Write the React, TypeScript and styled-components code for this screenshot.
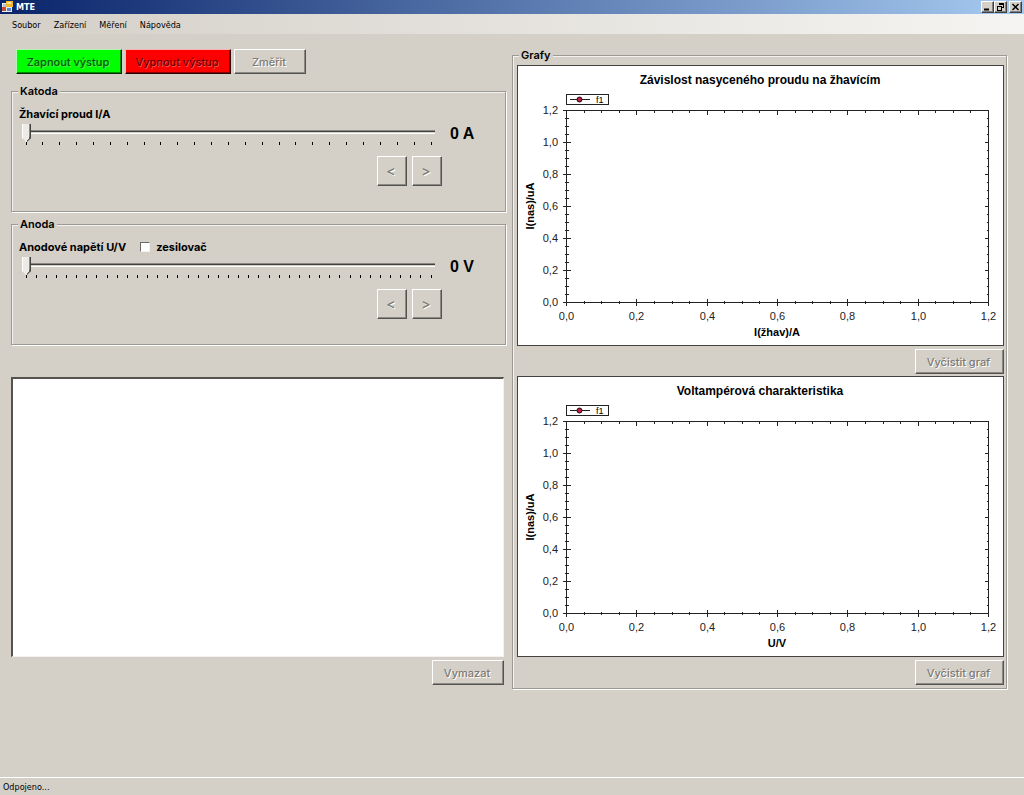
import React from 'react';
import styled, { createGlobalStyle } from 'styled-components';

const FACE = '#d4d0c8';
const SHADOW = '#9c9a94';
const UI_FONT = '"DejaVu Sans Condensed", "Noto Sans", sans-serif';
const FORM_FONT = 'Inter, "Liberation Sans", sans-serif';
const CHART_FONT = '"Liberation Sans", Arial, sans-serif';

const GlobalStyle = createGlobalStyle`
  *, *::before, *::after { box-sizing: border-box; }
  body {
    margin: 0;
    background: ${FACE};
    color: #000;
    font-family: ${FORM_FONT};
    font-size: 11px;
    line-height: 14px;
  }
`;

const Window = styled.div`
  display: flex;
  flex-direction: column;
  min-height: 100vh;
`;

const TitleBar = styled.header`
  display: flex;
  align-items: center;
  gap: 3px;
  height: 14px;
  padding: 0 2px;
  background: linear-gradient(to right, #0a246a, #a6caf0);
`;

const Title = styled.h1`
  flex: 1;
  margin: 0;
  color: #fff;
  font: bold 9px/14px ${UI_FONT};
`;

const Captions = styled.div`
  display: flex;
`;

const CaptionButton = styled.button<{ $apart?: boolean }>`
  display: flex;
  width: 13px;
  height: 12px;
  margin-left: ${(p) => (p.$apart ? 2 : 0)}px;
  padding: 0;
  border: 1px solid;
  border-color: #fff #404040 #404040 #fff;
  background: ${FACE};
  box-shadow: inset -1px -1px #808080;
`;

const MenuBar = styled.nav`
  display: flex;
  gap: 1px;
  height: 20px;
  padding: 0 6px;
  background: linear-gradient(to right, #d4d0c8, #f5f4f2);
`;

const MenuItem = styled.button`
  padding: 2px 6px 0;
  border: 0;
  background: transparent;
  color: #000;
  font: 9px/18px ${UI_FONT};
`;

const Workspace = styled.main`
  flex: 1;
  display: grid;
  grid-template-columns: minmax(0, 1fr) minmax(0, 1fr);
  align-items: start;
  gap: 6px;
  padding: 14px 17px 14px 11px;
`;

const Controls = styled.div`
  display: flex;
  flex-direction: column;
  gap: 5px;
  padding-top: 1px;
`;

const Toolbar = styled.div`
  display: flex;
  gap: 3px;
  padding: 0 5px 5px;
`;

type Tone = 'face' | 'green' | 'red';

const tones = {
  face: { back: FACE, text: '#7c7a76', glow: '#fff', light: '#fff', dark: '#55534f', mid: '#8c8a84' },
  green: { back: '#00ff00', text: '#005c00', glow: '#50e850', light: '#b4f5b4', dark: '#002c00', mid: '#008a00' },
  red: { back: '#ff0000', text: '#640000', glow: '#ff5050', light: '#f5b4b4', dark: '#2c0000', mid: '#8a0000' },
};

const PushButton = styled.button<{ $width: number; $tone?: Tone }>`
  width: ${(p) => p.$width}px;
  height: 25px;
  padding: 0 2px 0 0;
  border: 1px solid;
  border-color: ${(p) => {
    const t = tones[p.$tone ?? 'face'];
    return `${t.light} ${t.dark} ${t.dark} ${t.light}`;
  }};
  background: ${(p) => tones[p.$tone ?? 'face'].back};
  box-shadow: inset -1px -1px ${(p) => tones[p.$tone ?? 'face'].mid};
  color: ${(p) => tones[p.$tone ?? 'face'].text};
  text-shadow: 1px 1px ${(p) => tones[p.$tone ?? 'face'].glow};
  font: 500 11px/14px ${FORM_FONT};
`;

const StepButton = styled(PushButton)`
  height: 30px;
  font-size: 14px;
`;

const Group = styled.fieldset`
  min-width: 0;
  margin: 0;
  padding: 0;
  border: 1px solid ${SHADOW};
  box-shadow: 1px 1px #fff, inset 1px 1px #f4f2ee;
`;

const Legend = styled.legend`
  margin-left: 6px;
  padding: 0 2px;
  background: ${FACE};
  font: 600 11px/14px ${FORM_FONT};
`;

const GroupBody = styled.div`
  padding: 8px 0 25px 7px;
`;

const LabelRow = styled.div`
  display: flex;
  align-items: center;
  gap: 14px;
  height: 16px;
  margin-bottom: 2px;
  font-weight: 700;
`;

const CheckLabel = styled.label`
  display: flex;
  align-items: center;
  gap: 6px;
`;

const CheckBox = styled.input`
  appearance: none;
  width: 10px;
  height: 10px;
  margin: 0;
  border: 1px solid;
  border-color: #6a6864 #f4f2ee #f4f2ee #6a6864;
  background: #fff;
`;

const SliderRow = styled.div`
  display: flex;
  align-items: flex-start;
`;

const SliderColumn = styled.div`
  flex: 1;
  display: flex;
  flex-direction: column;
  padding: 0 15px 0 3px;
`;

const Slider = styled.input`
  appearance: none;
  display: block;
  width: 100%;
  height: 18px;
  margin: 0;
  background: transparent;

  &::-webkit-slider-runnable-track {
    height: 18px;
    background: linear-gradient(#8a8882, #8a8882) 0 6px / 100% 1px no-repeat,
      linear-gradient(#44423e, #44423e) 0 7px / 100% 1px no-repeat,
      linear-gradient(#fff, #fff) 0 9px / 100% 1px no-repeat;
  }

  &::-webkit-slider-thumb {
    appearance: none;
    width: 9px;
    height: 18px;
    background: linear-gradient(128deg, transparent 35%, #55534f 36%) 5px 13px / 4px 5px no-repeat,
      linear-gradient(to right, #fff 1px, #ecebe6 1px 7px, #8c8a84 7px 8px, #44423e 8px);
    clip-path: polygon(0 0, 100% 0, 100% 14px, 5px 100%, 4px 100%, 0 14px);
  }
`;

const TickScale = styled.svg`
  display: block;
  width: 100%;
  height: 4px;
  padding: 0 4px;
  overflow: visible;
`;

const Readout = styled.output`
  width: 55px;
  font: bold 16px/20px ${CHART_FONT};
`;

const Steppers = styled.div`
  display: flex;
  justify-content: flex-end;
  gap: 5px;
  margin: 10px 63px 0 0;
`;

const LogArea = styled.div`
  display: flex;
  flex-direction: column;
  align-items: flex-end;
  gap: 3px;
  padding: 27px 2px 0 0;
`;

const Log = styled.textarea`
  display: block;
  width: 100%;
  height: 280px;
  resize: none;
  border: 1px solid;
  border-color: #55534f #f4f2ee #f4f2ee #55534f;
  border-width: 2px 1px 1px 2px;
  background: #fff;
  font: 11px/14px ${FORM_FONT};
  outline: 0;
`;

const Graphs = styled.div`
  display: flex;
  flex-direction: column;
  gap: 2px;
  padding: 3px 2px 3px 4px;
`;

const GraphBlock = styled.section`
  display: flex;
  flex-direction: column;
  align-items: flex-end;
  gap: 3px;
`;

const ChartSvg = styled.svg`
  display: block;
  width: 100%;
  height: auto;
  border: 1px solid #44423e;
  background: #fff;
  font-family: ${CHART_FONT};
`;

const ChartTitle = styled.text`
  font: 700 12px ${CHART_FONT};
  text-anchor: middle;
`;

const AxisTitle = styled.text`
  font: 700 11px ${CHART_FONT};
  text-anchor: middle;
`;

const AxisLabel = styled.text<{ $end?: boolean }>`
  font-size: 11px;
  fill: #222;
  text-anchor: ${(p) => (p.$end ? 'end' : 'middle')};
`;

const LegendText = styled.text`
  font-size: 9px;
`;

const StatusBar = styled.footer`
  height: 18px;
  padding: 0 3px;
  border-top: 1px solid #fff;
  font: 9px/18px ${UI_FONT};
`;

function AppIcon() {
  return (
    <svg width="11" height="12" viewBox="0 0 11 12" aria-hidden="true">
      <rect x="0" y="2" width="10" height="9" fill="#e8ecf4" />
      <rect x="4" y="0" width="7" height="6" fill="#f4b62c" />
      <rect x="5" y="1" width="4" height="2" fill="#fde38c" />
      <rect x="1" y="3" width="3" height="3" fill="#a8c4ec" />
      <rect x="0" y="6" width="4" height="4" fill="#c8502c" />
      <rect x="5" y="7" width="4" height="3" fill="#5c84d0" />
    </svg>
  );
}

function MinimizeGlyph() {
  return (
    <svg width="11" height="10" viewBox="0 0 11 10">
      <path d="M2 7.5h5" stroke="#000" strokeWidth="2" />
    </svg>
  );
}

function RestoreGlyph() {
  return (
    <svg width="11" height="10" viewBox="0 0 11 10" fill="none" stroke="#000" shapeRendering="crispEdges">
      <path d="M4 1.5h5M4.5 1v2M8.5 1v5M7 5.5h2M2 4.5h5M2.5 4v4M6.5 4v4M2 8.5h5M4 2.5h5" />
    </svg>
  );
}

function CloseGlyph() {
  return (
    <svg width="11" height="10" viewBox="0 0 11 10">
      <path d="M2.5 2l6 6M8.5 2l-6 6" stroke="#000" strokeWidth="1.5" />
    </svg>
  );
}

function Ticks({ intervals }: { intervals: number }) {
  return (
    <TickScale aria-hidden="true" shapeRendering="crispEdges">
      {Array.from({ length: intervals + 1 }, (_, i) => {
        const x = `${(i / intervals) * 100}%`;
        return <line key={i} x1={x} x2={x} y1="0" y2="3" stroke="#000" />;
      })}
    </TickScale>
  );
}

interface ElectrodeProps {
  name: string;
  label: string;
  id: string;
  value: string;
  intervals: number;
  children?: React.ReactNode;
}

function Electrode({ name, label, id, value, intervals, children }: ElectrodeProps) {
  return (
    <Group>
      <Legend>{name}</Legend>
      <GroupBody>
        <LabelRow>
          <label htmlFor={id}>{label}</label>
          {children}
        </LabelRow>
        <SliderRow>
          <SliderColumn>
            <Slider id={id} type="range" min={0} max={intervals} defaultValue={0} />
            <Ticks intervals={intervals} />
          </SliderColumn>
          <Readout htmlFor={id}>{value}</Readout>
        </SliderRow>
        <Steppers>
          <StepButton $width={30} disabled>&lt;</StepButton>
          <StepButton $width={30} disabled>&gt;</StepButton>
        </Steppers>
      </GroupBody>
    </Group>
  );
}

const LEFT = 48.5;
const RIGHT = 470.5;
const TOP = 44.5;
const BOTTOM = 236.5;
const SCALE = ['0,0', '0,2', '0,4', '0,6', '0,8', '1,0', '1,2'];

function Chart({ title, xTitle, yTitle }: { title: string; xTitle: string; yTitle: string }) {
  const steps = Array.from({ length: 25 }, (_, i) => i);
  const xAt = (i: number) => Math.round(((RIGHT - LEFT) * i) / 24) + LEFT;
  const yAt = (i: number) => BOTTOM - ((BOTTOM - TOP) * i) / 24;
  const grid = steps
    .map((i) => {
      const major = i % 4 === 0;
      const outer = major ? 3 : 1;
      const inner = major ? 4 : 2;
      const x = xAt(i);
      const y = yAt(i);
      return (
        `M${x} ${BOTTOM - inner}V${BOTTOM + outer + 0.5}` +
        `M${x} ${TOP}V${TOP + inner}` +
        `M${LEFT - outer - 0.5} ${y}H${LEFT + inner}` +
        `M${RIGHT} ${y}H${RIGHT - inner}`
      );
    })
    .join('');

  return (
    <ChartSvg viewBox="0 0 485 279" role="img" aria-label={title}>
      <ChartTitle x="242" y="18">{title}</ChartTitle>
      <g fill="none" stroke="#222" shapeRendering="crispEdges">
        <rect x="48.5" y="28.5" width="42" height="10" />
        <rect x={LEFT} y={TOP} width={RIGHT - LEFT} height={BOTTOM - TOP} />
        <path d={grid} />
        <path d="M52 33.5H72" />
      </g>
      <circle cx="61.5" cy="33.5" r="2.5" fill="#c02040" stroke="#200008" />
      <LegendText x="78" y="37">f1</LegendText>
      {SCALE.map((text, i) => (
        <g key={text}>
          <AxisLabel x={xAt(i * 4)} y="254">{text}</AxisLabel>
          <AxisLabel $end x="40" y={yAt(i * 4) + 3}>{text}</AxisLabel>
        </g>
      ))}
      <AxisTitle x="259" y="270">{xTitle}</AxisTitle>
      <AxisTitle transform="translate(16 140) rotate(-90)">{yTitle}</AxisTitle>
    </ChartSvg>
  );
}

export default function App() {
  return (
    <Window>
      <GlobalStyle />
      <TitleBar>
        <AppIcon />
        <Title>MTE</Title>
        <Captions>
          <CaptionButton aria-label="Minimalizovat"><MinimizeGlyph /></CaptionButton>
          <CaptionButton aria-label="Obnovit"><RestoreGlyph /></CaptionButton>
          <CaptionButton aria-label="Zavřít" $apart><CloseGlyph /></CaptionButton>
        </Captions>
      </TitleBar>
      <MenuBar>
        {['Soubor', 'Zařízení', 'Měření', 'Nápověda'].map((item) => (
          <MenuItem key={item}>{item}</MenuItem>
        ))}
      </MenuBar>
      <Workspace>
        <Controls>
          <Toolbar>
            <PushButton $width={106} $tone="green" disabled>Zapnout výstup</PushButton>
            <PushButton $width={106} $tone="red" disabled>Vypnout výstup</PushButton>
            <PushButton $width={72} disabled>Změřit</PushButton>
          </Toolbar>
          <Electrode name="Katoda" label="Žhavící proud I/A" id="heating" value="0 A" intervals={24} />
          <Electrode name="Anoda" label="Anodové napětí U/V" id="anode" value="0 V" intervals={40}>
            <CheckLabel>
              <CheckBox type="checkbox" />
              zesilovač
            </CheckLabel>
          </Electrode>
          <LogArea>
            <Log aria-label="Výpis" readOnly />
            <PushButton $width={72} disabled>Vymazat</PushButton>
          </LogArea>
        </Controls>
        <Group>
          <Legend>Grafy</Legend>
          <Graphs>
            <GraphBlock>
              <Chart title="Závislost nasyceného proudu na žhavícím" xTitle="I(žhav)/A" yTitle="I(nas)/uA" />
              <PushButton $width={89} disabled>Vyčistit graf</PushButton>
            </GraphBlock>
            <GraphBlock>
              <Chart title="Voltampérová charakteristika" xTitle="U/V" yTitle="I(nas)/uA" />
              <PushButton $width={89} disabled>Vyčistit graf</PushButton>
            </GraphBlock>
          </Graphs>
        </Group>
      </Workspace>
      <StatusBar>Odpojeno...</StatusBar>
    </Window>
  );
}
